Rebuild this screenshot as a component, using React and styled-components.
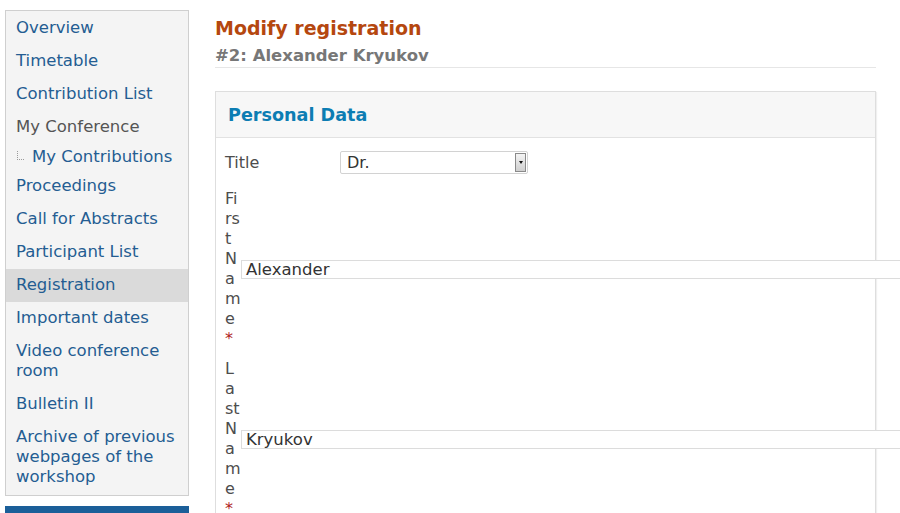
import React from 'react'
import styled, { createGlobalStyle } from 'styled-components'

const Global = createGlobalStyle`
  html, body {
    margin: 0;
    padding: 0;
    background: #fff;
    overflow: hidden;
    font-family: 'DejaVu Sans', Verdana, sans-serif;
  }
`

const Page = styled.div`
  display: flex;
  align-items: flex-start;
  gap: 26px;
  padding: 10px 0 0 5px;
  width: 895px;
  height: 503px;
  overflow: hidden;
`

const SideColumn = styled.div`
  flex: 0 0 184px;
  display: flex;
  flex-direction: column;
  gap: 10px;
`

const Menu = styled.ul`
  list-style: none;
  margin: 0;
  padding: 1px 0 1px;
  background: #f4f4f4;
  border: 1px solid #cfcfcf;
`

const MenuItem = styled.li`
  padding: ${p => (p.sub ? '3px 10px 3px 11px' : '6px 10px 7px 10px')};
  font-size: 16.5px;
  line-height: 20px;
  color: ${p => (p.plain ? '#555' : '#245d92')};
  background: ${p => (p.active ? '#dadada' : 'transparent')};
  display: flex;
  align-items: center;
  gap: 8px;
`

const Branch = styled.span`
  width: 6px;
  height: 8px;
  margin-top: -4px;
  border-left: 1px dotted #9a9a9a;
  border-bottom: 1px dotted #9a9a9a;
`

const BlueBar = styled.div`
  height: 12px;
  background: #1b5f99;
`

const Main = styled.div`
  flex: 0 0 661px;
  min-width: 0;
  display: flex;
  flex-direction: column;
`

const Heading = styled.h1`
  margin: 6px 0 0;
  font-size: 19px;
  line-height: 24px;
  font-weight: bold;
  color: #b5470f;
`

const SubHeading = styled.h2`
  margin: 6px 0 0;
  padding-bottom: 1px;
  font-size: 16.5px;
  line-height: 20px;
  font-weight: bold;
  color: #777;
  border-bottom: 1px solid #e6e6e6;
`

const Card = styled.section`
  margin-top: 23px;
  border: 1px solid #dedede;
  box-shadow: 1px 1px 1px rgba(0, 0, 0, 0.06);
  background: #fff;
  height: 600px;
`

const CardHeader = styled.div`
  height: 45px;
  background: #f7f7f7;
  border-bottom: 1px solid #e2e2e2;
  display: flex;
  align-items: center;
  padding-left: 12px;
  font-size: 17.6px;
  font-weight: bold;
  color: #0c7db3;
`

const CardBody = styled.div`
  padding: 13px 0 0 9px;
  display: flex;
  flex-direction: column;
`

const TitleRow = styled.div`
  display: flex;
  align-items: center;
  height: 23px;
  margin-bottom: 15px;
`

const FieldRow = styled.div`
  display: flex;
  align-items: center;
  margin-bottom: 10px;
`

const Label = styled.div`
  flex: 0 0 ${p => p.width};
  font-size: 16px;
  line-height: 20px;
  color: #4d4d4d;
  word-break: break-all;
`

const Required = styled.span`
  color: #b01c1c;
  font-size: 16px;
`

const SelectBox = styled.div`
  height: 21px;
  width: 180px;
  border: 1px solid #d2d2d2;
  border-radius: 2px;
  display: flex;
  align-items: center;
  justify-content: space-between;
  font-size: 16px;
  color: #333;
  padding-left: 6px;
`

const Arrow = styled.span`
  width: 9px;
  height: 17px;
  margin-right: 1px;
  border: 1px solid #8a8a8a;
  background: linear-gradient(#f4f4f4, #cfcfcf);
  display: flex;
  align-items: center;
  justify-content: center;
  &::after {
    content: '';
    border-left: 2.5px solid transparent;
    border-right: 2.5px solid transparent;
    border-top: 3px solid #111;
  }
`

const TextInput = styled.div`
  flex: 0 0 700px;
  height: 17px;
  border: 1px solid #dcdcdc;
  background: #fff;
  padding-left: 4px;
  font-size: 16.5px;
  line-height: 17px;
  color: #333;
`

const menu = [
  { label: 'Overview' },
  { label: 'Timetable' },
  { label: 'Contribution List' },
  { label: 'My Conference', plain: true },
  { label: 'My Contributions', sub: true },
  { label: 'Proceedings' },
  { label: 'Call for Abstracts' },
  { label: 'Participant List' },
  { label: 'Registration', active: true },
  { label: 'Important dates' },
  { label: 'Video conference room' },
  { label: 'Bulletin II' },
  { label: 'Archive of previous webpages of the workshop' },
]

export default function App() {
  return (
    <>
      <Global />
      <Page>
        <SideColumn>
          <Menu>
            {menu.map(item => (
              <MenuItem key={item.label} {...item}>
                {item.sub && <Branch />}
                <span>{item.label}</span>
              </MenuItem>
            ))}
          </Menu>
          <BlueBar />
        </SideColumn>
        <Main>
          <Heading>Modify registration</Heading>
          <SubHeading>#2: Alexander Kryukov</SubHeading>
          <Card>
            <CardHeader>Personal Data</CardHeader>
            <CardBody>
              <TitleRow>
                <Label width="115px">Title</Label>
                <SelectBox>
                  Dr.
                  <Arrow />
                </SelectBox>
              </TitleRow>
              <FieldRow>
                <Label width="16px">
                  First Name <Required>*</Required>
                </Label>
                <TextInput>Alexander</TextInput>
              </FieldRow>
              <FieldRow>
                <Label width="16px">
                  Last Name <Required>*</Required>
                </Label>
                <TextInput>Kryukov</TextInput>
              </FieldRow>
            </CardBody>
          </Card>
        </Main>
      </Page>
    </>
  )
}
